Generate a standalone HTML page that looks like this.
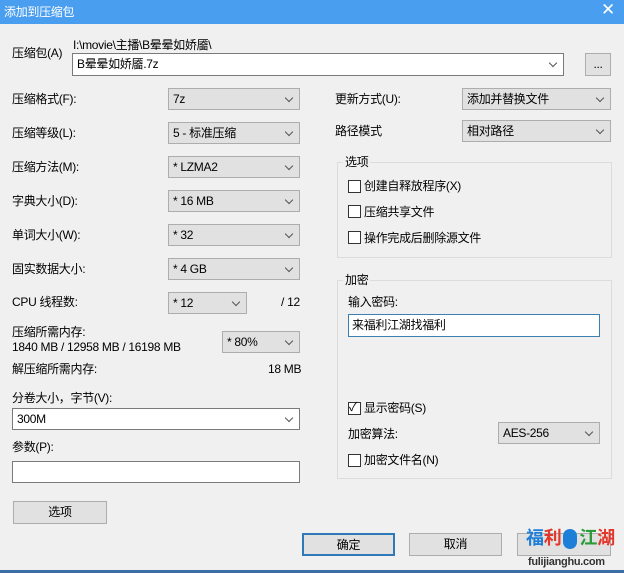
<!DOCTYPE html>
<html><head><meta charset="utf-8"><style>
*{box-sizing:border-box;margin:0;padding:0}
body{width:624px;height:573px;background:#f0f0f0;position:relative;overflow:hidden;font-family:"Liberation Sans","Noto Sans CJK SC",sans-serif;font-size:12px;color:#000;letter-spacing:-0.3px}
.a{position:absolute;white-space:nowrap;line-height:14px}
.tb{position:absolute;left:0;top:0;width:624px;height:24px;background:#4a9ef0;color:#fff}
.cb{position:absolute;height:22px;background:#e1e1e1;border:1px solid #adadad;padding:3px 0 0 4px;line-height:14px}
.cb.w{background:#fff;border-color:#7a7a7a}
.cb::after{content:"";position:absolute;right:7px;top:6px;width:5px;height:5px;border-right:1px solid #555;border-bottom:1px solid #555;transform:rotate(45deg)}
.bt{position:absolute;height:23px;background:#e1e1e1;border:1px solid #adadad;text-align:center;line-height:21px}
.inp{position:absolute;height:22px;background:#fff;border:1px solid #7a7a7a;padding:3px 0 0 3px;line-height:14px}
.gb{position:absolute;border:1px solid #dcdcdc}
.gl{position:absolute;background:#f0f0f0;padding:0 2px;line-height:14px}
.ck{position:absolute;width:13px;height:13px;border:1px solid #333;background:#fff}
</style></head><body>
<div class="tb"><span class="a" style="left:4px;top:5px">添加到压缩包</span><span class="a" style="left:601px;top:3px;font-size:17px">✕</span></div>
<span class="a" style="left:12px;top:46px">压缩包(A)</span>
<span class="a" style="left:73px;top:38px">I:\movie\主播\B晕晕如娇靥\</span>
<div class="cb w" style="left:72px;top:53px;width:492px;height:23px">B晕晕如娇靥.7z</div>
<div class="bt" style="left:585px;top:53px;width:26px">...</div>

<span class="a" style="left:12px;top:92px">压缩格式(F):</span>
<div class="cb" style="left:168px;top:88px;width:132px">7z</div>
<span class="a" style="left:12px;top:126px">压缩等级(L):</span>
<div class="cb" style="left:168px;top:122px;width:132px">5 - 标准压缩</div>
<span class="a" style="left:12px;top:160px">压缩方法(M):</span>
<div class="cb" style="left:168px;top:156px;width:132px">* LZMA2</div>
<span class="a" style="left:12px;top:194px">字典大小(D):</span>
<div class="cb" style="left:168px;top:190px;width:132px">* 16 MB</div>
<span class="a" style="left:12px;top:228px">单词大小(W):</span>
<div class="cb" style="left:168px;top:224px;width:132px">* 32</div>
<span class="a" style="left:12px;top:262px">固实数据大小:</span>
<div class="cb" style="left:168px;top:258px;width:132px">* 4 GB</div>
<span class="a" style="left:12px;top:295px">CPU 线程数:</span>
<div class="cb" style="left:168px;top:292px;width:79px">* 12</div>
<span class="a" style="left:281px;top:295px">/ 12</span>
<span class="a" style="left:12px;top:325px">压缩所需内存:</span>
<span class="a" style="left:12px;top:340px">1840 MB / 12958 MB / 16198 MB</span>
<div class="cb" style="left:222px;top:331px;width:78px">* 80%</div>
<span class="a" style="left:12px;top:362px">解压缩所需内存:</span>
<span class="a" style="left:268px;top:362px">18 MB</span>
<span class="a" style="left:12px;top:391px">分卷大小，字节(V):</span>
<div class="cb w" style="left:12px;top:408px;width:288px">300M</div>
<span class="a" style="left:12px;top:440px">参数(P):</span>
<div class="inp" style="left:12px;top:461px;width:288px"></div>
<div class="bt" style="left:13px;top:501px;width:94px">选项</div>

<span class="a" style="left:335px;top:92px">更新方式(U):</span>
<div class="cb" style="left:462px;top:88px;width:149px">添加并替换文件</div>
<span class="a" style="left:335px;top:124px">路径模式</span>
<div class="cb" style="left:462px;top:120px;width:149px">相对路径</div>

<div class="gb" style="left:337px;top:162px;width:275px;height:96px"></div>
<span class="gl" style="left:343px;top:155px">选项</span>
<div class="ck" style="left:348px;top:180px"></div><span class="a" style="left:364px;top:179px">创建自释放程序(X)</span>
<div class="ck" style="left:348px;top:205px"></div><span class="a" style="left:364px;top:205px">压缩共享文件</span>
<div class="ck" style="left:348px;top:231px"></div><span class="a" style="left:364px;top:231px">操作完成后删除源文件</span>

<div class="gb" style="left:337px;top:280px;width:275px;height:199px"></div>
<span class="gl" style="left:343px;top:273px">加密</span>
<span class="a" style="left:348px;top:295px">输入密码:</span>
<div class="inp" style="left:348px;top:314px;width:252px;height:23px;border-color:#3c7fb1">来福利江湖找福利</div>
<div class="ck" style="left:348px;top:402px"></div><span class="a" style="left:349px;top:400px;font-size:12px">✓</span>
<span class="a" style="left:364px;top:401px">显示密码(S)</span>
<span class="a" style="left:348px;top:427px">加密算法:</span>
<div class="cb" style="left:498px;top:422px;width:102px">AES-256</div>
<div class="ck" style="left:348px;top:454px"></div><span class="a" style="left:364px;top:453px">加密文件名(N)</span>

<div class="bt" style="left:302px;top:533px;width:93px;border:2px solid #2f79b8">确定</div>
<div class="bt" style="left:409px;top:533px;width:93px">取消</div>
<div class="bt" style="left:517px;top:533px;width:94px"></div>
<span class="a" style="left:526px;top:529px;font-size:18px;font-weight:bold;color:#1e7fd8">福<span style="color:#e2372a">利</span><span style="display:inline-block;width:14px;height:20px;background:#1e7fd8;border-radius:7px;vertical-align:middle;margin:0 2px"></span><span style="color:#2a9a3a">江</span><span style="color:#e2372a">湖</span></span>
<span class="a" style="left:528px;top:555px;font-size:11px;font-weight:bold;color:#333">fulijianghu.com</span>
<div style="position:absolute;left:0;top:570px;width:624px;height:3px;background:#3a6ea5"></div>
</body></html>
